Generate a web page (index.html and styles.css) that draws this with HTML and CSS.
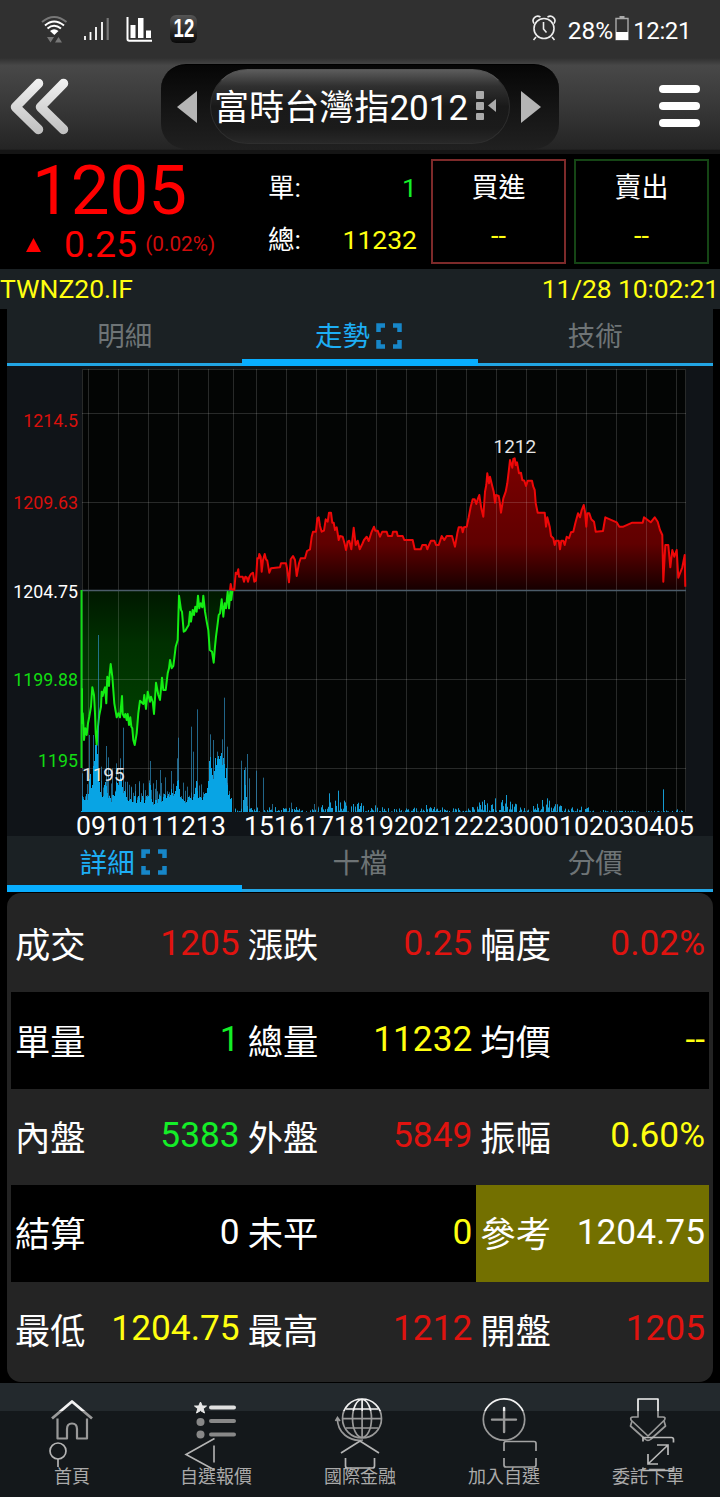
FILE: index.html
```html
<!DOCTYPE html>
<html lang="zh-Hant">
<head>
<meta charset="utf-8">
<title>富時台灣指2012</title>
<link rel="stylesheet" href="styles.css">
</head>
<body>
<div class="status">
  <svg class="status-icons" viewBox="0 0 240 58" width="240" height="58">
    <g fill="none" stroke="#fff" stroke-width="2">
      <path d="M42 22Q54 12 66.500 22" stroke="#777"/>
      <path d="M45 25.500Q54 17.500 64 25.500M47.500 28.500Q54 23 61 28.500"/>
    </g>
    <path d="M50 31Q54 27.500 58.500 31L54.300 35z" fill="#fff"/>
    <path d="M47 37h7l-3.500 5.500zM55 42.500h7L58.500 37z" fill="#777"/>
    <path d="M85 36v4M90.500 32v8M96 27v13M102 22v18" stroke="#fff" stroke-width="1.800"/>
    <path d="M107.700 18v22" stroke="#777" stroke-width="2.200"/>
    <path d="M127.500 17v22q0 1.800 1.800 1.800H152" stroke="#fff" stroke-width="2" fill="none"/>
    <path d="M130.500 25h5v13h-5zM138 18h5.500v20H138zM146 30.500h5V38h-5z" fill="#fff"/>
  </svg>
  <span class="badge"><span>12</span></span>
  <span class="status-right">
    <svg viewBox="0 0 26 28" width="26" height="28" fill="none" stroke="#eee" stroke-width="1.600">
      <circle cx="13" cy="14.500" r="10"/><path d="M12.500 8v7l3 3.500M5 23l-2.500 3M21 23l2.500 3M3 9.500C0 5 5 .5 9.500 3M23 9.500C26 5 21 .5 16.500 3"/>
    </svg>
    <span class="pct">28%</span>
    <svg viewBox="0 0 14 26" width="14" height="26"><path d="M1 3.500h12v21H1z" fill="none" stroke="#aaa" stroke-width="1.400"/><path d="M4.500 1h5v2h-5z" fill="#aaa"/><path d="M1 17h12v8H1z" fill="#fff"/></svg>
    <span class="clock">12:21</span>
  </span>
</div>

<header class="header">
  <svg class="back" viewBox="0 0 72 60" width="72" height="60">
    <defs><linearGradient id="metal" x1="0" y1="0" x2="0" y2="60" gradientUnits="userSpaceOnUse"><stop offset="0" stop-color="#f4f4f4"/><stop offset="1" stop-color="#bdbdbd"/></linearGradient></defs>
    <path d="M38.500 7.500L15.500 31 38.500 53.500M63.500 7.500L40.500 31 63.500 53.500" fill="none" stroke="url(#metal)" stroke-width="9.500" stroke-linecap="round" stroke-linejoin="round"/>
  </svg>
  <div class="switcher">
    <svg class="arrow" viewBox="0 0 20 32" width="20" height="32"><path d="M20 0v32L0 16z" fill="#b5b5b5"/></svg>
    <div class="title"><span>富時台灣指2012</span>
      <svg viewBox="0 0 22 30" width="22" height="30" fill="#aaa"><rect width="8" height="8" rx="1"/><rect y="11" width="8" height="8" rx="1"/><rect y="22" width="8" height="7" rx="1"/><path d="M20 8v13L12 14.500z"/></svg>
    </div>
    <svg class="arrow" viewBox="0 0 20 32" width="20" height="32"><path d="M0 0v32l20-16z" fill="#b5b5b5"/></svg>
  </div>
  <div class="menu"><i></i><i></i><i></i></div>
</header>

<section class="quote">
  <div class="price">
    <div class="last">1205</div>
    <div class="change"><svg viewBox="0 0 15 14" width="15" height="14"><path d="M0 14h15L7.500 0z" fill="#f00"/></svg><b>0.25</b><small>(0.02%)</small></div>
  </div>
  <dl class="volume">
    <div><dt>單:</dt><dd class="green">1</dd></div>
    <div><dt>總:</dt><dd class="yellow">11232</dd></div>
  </dl>
  <div class="order buy"><span>買進</span><em>--</em></div>
  <div class="order sell"><span>賣出</span><em>--</em></div>
</section>

<div class="info"><span>TWNZ20.IF</span><span>11/28 10:02:21</span></div>

<main class="panel">
  <nav class="tabs">
    <div class="tab">明細</div>
    <div class="tab active">走勢<svg viewBox="0 0 26 26" width="26" height="26"><path d="M2.500 9V2.500H9M17 2.500h6.500V9M23.500 17v6.500H17M9 23.500H2.500V17" fill="none" stroke="#1787c9" stroke-width="4.500"/></svg></div>
    <div class="tab">技術</div>
  </nav>

  <svg class="chart" id="chart" viewBox="7 366 706 470" width="706" height="470">
    <defs>
      <linearGradient id="down" x1="0" y1="590" x2="0" y2="745" gradientUnits="userSpaceOnUse"><stop offset="0" stop-color="#001800"/><stop offset=".35" stop-color="#003000"/><stop offset="1" stop-color="#004200"/></linearGradient>
      <linearGradient id="up" x1="0" y1="458" x2="0" y2="590" gradientUnits="userSpaceOnUse"><stop offset="0" stop-color="#7a0000"/><stop offset=".65" stop-color="#600000"/><stop offset="1" stop-color="#160000"/></linearGradient>
    </defs>
    <rect x="82" y="369" width="604" height="443" fill="#030504"/>
    <g id="areas"></g>
    <g id="grid" stroke="#ffffff" stroke-opacity=".15" fill="none"></g>
    <path d="M82 590.500h604" stroke="#4b5c69" stroke-width="1.300"/>
    <g id="lines" fill="none" stroke-linejoin="round"></g>
    <g id="volume"></g>
    <g class="axis" text-anchor="end">
      <text x="78" y="426.500" fill="#d9100c">1214.5</text>
      <text x="78" y="508.500" fill="#d9100c">1209.63</text>
      <text x="78" y="597.500" fill="#fff">1204.75</text>
      <text x="78" y="686" fill="#12dc12">1199.88</text>
      <text x="78" y="767" fill="#12dc12">1195</text>
    </g>
    <g class="mark"><text x="493.500" y="453">1212</text><text x="82" y="781">1195</text></g>
    <g class="hours" id="hours" text-anchor="middle"></g>
  </svg>

  <nav class="tabs lower">
    <div class="tab active">詳細<svg viewBox="0 0 26 26" width="26" height="26"><path d="M2.500 9V2.500H9M17 2.500h6.500V9M23.500 17v6.500H17M9 23.500H2.500V17" fill="none" stroke="#1787c9" stroke-width="4.500"/></svg></div>
    <div class="tab">十檔</div>
    <div class="tab">分價</div>
  </nav>
</main>

<section class="details">
  <div class="row"><p><span>成交</span><b class="red">1205</b></p><p><span>漲跌</span><b class="red">0.25</b></p><p><span>幅度</span><b class="red">0.02%</b></p></div>
  <div class="row dark"><p><span>單量</span><b class="green">1</b></p><p><span>總量</span><b class="yellow">11232</b></p><p><span>均價</span><b class="yellow">--</b></p></div>
  <div class="row"><p><span>內盤</span><b class="green">5383</b></p><p><span>外盤</span><b class="red">5849</b></p><p><span>振幅</span><b class="yellow">0.60%</b></p></div>
  <div class="row dark"><p><span>結算</span><b>0</b></p><p><span>未平</span><b class="yellow">0</b></p><p class="flash"><span>參考</span><b>1204.75</b></p></div>
  <div class="row"><p><span>最低</span><b class="yellow">1204.75</b></p><p><span>最高</span><b class="red">1212</b></p><p><span>開盤</span><b class="red">1205</b></p></div>
</section>

<footer class="bottom">
  <a class="item"><svg viewBox="0 1383 144 86" width="144" height="86">
    <defs><linearGradient id="sheen" x1="0" y1="1383" x2="0" y2="1497" gradientUnits="userSpaceOnUse"><stop offset=".245" stop-color="#f2f2f2"/><stop offset=".246" stop-color="#999"/></linearGradient></defs>
    <g fill="none" stroke="url(#sheen)" stroke-width="2.200" stroke-linejoin="round">
      <path d="M52 1418.500L72 1401.500 92 1418.500" stroke-width="2.800"/><path d="M57.500 1418.500V1438.500H67V1429q0-5.500 5-5.500t5 5.500v9.500h10V1418.500"/>
    </g>
    <g fill="none" stroke="#b4b4b4" stroke-width="1.700"><circle cx="58" cy="1451" r="8"/><path d="M58 1459v8"/></g>
  </svg><span>首頁</span></a>
  <a class="item"><svg viewBox="144 1383 144 86" width="144" height="86">
    <path d="M200.500 1402l1.800 4h4.200l-3.300 2.700 1.300 4.300-4-2.400-4 2.400 1.300-4.300-3.300-2.700h4.200z" fill="#e8e8e8" stroke="#e8e8e8"/>
    <circle cx="200.500" cy="1422" r="4" fill="#888"/><circle cx="200.500" cy="1434.500" r="4" fill="#888"/>
    <path d="M211 1407.500h23" stroke="#e0e0e0" stroke-width="4" stroke-linecap="round"/><path d="M211 1421h23M211 1434.500h23" stroke="#888" stroke-width="4" stroke-linecap="round"/>
    <path d="M214.500 1438.500L186 1454.500 214.500 1470M214 1445.500v17" fill="none" stroke="#b4b4b4" stroke-width="1.600"/>
  </svg><span>自選報價</span></a>
  <a class="item"><svg viewBox="288 1383 144 86" width="144" height="86">
    <g fill="none" stroke="url(#sheen)" stroke-width="1.700">
      <circle cx="362" cy="1418.500" r="19.500"/><ellipse cx="362" cy="1418.500" rx="9.500" ry="19"/><path d="M362.100 1399.500v38M343 1418.600h38M346 1409h32M346 1428h32"/>
      <path d="M337.500 1418C337 1432 349 1442 363 1440M335.500 1421l2-3.500 2.500 3.500"/>
    </g>
    <path d="M341 1453L360 1441 379 1453M345.500 1458v8q0 2 2 2h25q2 0 2-2v-8" fill="none" stroke="#b4b4b4" stroke-width="1.700"/>
  </svg><span>國際金融</span></a>
  <a class="item"><svg viewBox="432 1383 144 86" width="144" height="86">
    <g fill="none" stroke="url(#sheen)"><circle cx="504" cy="1419.500" r="20.700" stroke-width="1.700"/><path d="M504.100 1408v24M492 1419.600h24" stroke-width="2.400" stroke-linecap="round"/></g>
    <path d="M504 1451v-7.500q0-2 2-2h28q2 0 2 2v7.500M504 1458v7q0 2 2 2h28q2 0 2-2v-7" fill="none" stroke="#a4a4a4" stroke-width="1.700"/>
  </svg><span>加入自選</span></a>
  <a class="item"><svg viewBox="576 1383 144 86" width="144" height="86">
    <g fill="none" stroke="url(#sheen)" stroke-width="1.700" stroke-linejoin="round"><path d="M638 1399h20v18h5q3 0 1.500 3L648 1436 631 1420q-1-3 2-3h5z"/><path d="M632 1421l-1.500 5L645 1439q3 3 6 0l14.500-13-1.500-5"/></g>
    <path d="M643 1441.500v-4h28.500q2 0 2 2v3M643 1467.500v3h28.500q2 0 2-2v-2M648 1464L668 1445M657 1445h11v10M648 1454v10h10" fill="none" stroke="#b8b8b8" stroke-width="1.700"/>
  </svg><span>委託下單</span></a>
</footer>
<script src="chart.js"></script>
</body>
</html>
```
FILE: chart.js
```js
// Series are stored in thirds of a pixel, each with its own origin.
const parse = (text, ox, oy) =>
  text.trim().split(/\s+/).map(p => p.split(',').map(Number)).map(([x, y]) => [ox + x / 3, oy + y / 3]);
const join = pts => pts.map(p => p[0].toFixed(1) + ' ' + p[1].toFixed(1)).join('L');
const add = (id, markup) => document.getElementById(id).insertAdjacentHTML('beforeend', markup);

const down = parse(`36,325 36,430 38,400 40,430 42,480 46,445 50,465 54,430 58,410 63,380 67,322 72,345 75,400 77,460 80,495 84,440 88,405 93,380 95,335 98,348 102,330 105,322 109,370 112,290 117,318 119,280 122,252 127,290 133,370 140,412 145,400 150,412 156,348 158,402 163,412 166,402 170,420 173,402 177,435 181,412 184,440 187,445 190,480 194,495 200,460 205,400 210,362 220,372 223,345 228,387 233,335 240,365 243,350 248,365 252,402 258,308 265,345 270,360 276,293 280,330 287,330 293,280 297,265 300,240 305,265 310,258 313,235 317,200 323,180 327,47 333,90 336,95 341,155 346,152 350,145 356,135 360,95 363,125 368,90 372,105 376,80 380,95 384,47 388,85 392,70 397,82 400,47 405,95 410,125 415,150 419,210 426,215 431,248 435,200 438,170 443,130 446,105 450,100 455,58 460,110 464,70 468,85 473,35 477,85 481,35 484,60 487,33`, 70, 580);

const up = parse(`0,450 2,432 5,448 13,450 17,398 21,402 25,388 27,410 38,410 42,425 46,410 50,412 54,425 58,410 63,402 69,398 73,425 78,422 82,355 86,355 88,342 92,350 95,395 99,360 104,342 108,358 112,362 118,398 123,385 150,382 153,370 168,370 171,385 177,427 182,358 189,348 195,360 200,408 207,370 212,355 225,355 231,333 240,328 245,290 249,275 258,275 262,235 266,232 270,258 275,275 282,272 287,238 293,245 297,218 303,218 307,248 311,248 315,270 320,262 326,300 330,288 338,290 344,312 348,330 353,305 358,302 364,328 371,263 377,315 383,302 389,328 397,312 402,300 410,290 416,303 424,278 432,260 436,272 443,272 450,290 457,275 470,275 474,288 486,288 489,275 500,275 503,288 518,288 523,300 548,300 554,328 572,328 577,315 588,315 592,328 597,315 603,302 613,302 618,315 626,315 635,288 643,300 650,288`, 230, 440)
  .concat(parse(`0,318 6,318 15,350 22,310 26,292 35,292 38,307 42,292 50,290 56,262 62,230 68,208 74,208 79,222 84,205 88,195 94,235 100,260 105,185 109,165 112,130 117,160 120,140 126,165 131,185 135,218 138,195 146,198 149,215 153,248 160,205 167,185 172,160 176,125 180,90 187,113 190,87 194,85 197,105 201,97 207,130 213,128 217,150 223,152 228,168 233,152 246,152 250,170 254,180 257,220 263,248 284,248 288,290 292,262 299,290 303,318 310,325 314,345 318,332 326,332 330,358 334,332 340,332 344,345 350,320 357,325 363,307 370,305 376,280 384,250 390,262 395,240 401,225 405,245 409,290 412,250 418,250 424,268 432,275 437,305 459,303 466,262 500,277 508,290 520,290 547,278 578,278 582,262 602,277 614,262 623,275 630,300 637,315 640,455 646,345 655,345 661,412 667,360 673,380 680,360 685,443 697,412 704,375 706,470`, 450, 430));

add('areas', `<path fill="url(#down)" d="M82 590L${join(down)}L232 590z"/><path fill="url(#up)" d="M230 590L${join(up)}L685 590z"/>`);
add('lines', `<path d="M81.500 590V768" stroke="#0fdc14" stroke-width="2"/><path d="M${join(down)}" stroke="#14ee14" stroke-width="2"/><path d="M${join(up)}" stroke="#ee0808" stroke-width="2"/>`);

const verticals = [89, 119, 149, 179, 209, 234, 257, 287, 317, 347, 377, 407, 437, 467, 497, 527, 557, 587, 617, 647, 677];
add('grid', `<path d="M82.500 812V369.500H685.500V812${verticals.map(x => `M${x - .5} 369V812`).join('')}M82 413.500H686M82 502.500H686M82 679.500H686M82 768.500H686"/>`);

const hours = ['09', '10', '11', '12', '13', '', '15', '16', '17', '18', '19', '20', '21', '22', '23', '00', '01', '02', '03', '04', '05'];
add('hours', hours.map((h, i) => h ? `<text x="${verticals[i] + 2}" y="834.500">${h}</text>` : '').join(''));

const base = parse(`35,640 40,655 46,665 50,640 54,670 58,600 62,580 66,650 70,560 74,540 76,495 82,495 84,580 88,600 92,640 96,650 100,655 105,600 110,620 115,655 120,645 124,670 128,640 135,650 140,600 145,620 150,590 155,600 160,640 165,630 170,655 176,665 182,655 190,670 195,640 200,672 206,645 212,668 218,645 224,670 230,645 235,655 240,590 244,655 252,678 258,655 262,670 270,640 275,670 284,640 290,655 296,640 300,660 304,625 310,650 318,630 321,605 327,600 330,650 340,660 348,670 356,650 362,655 368,660 374,640 380,600 384,655 392,650 398,660 404,640 410,640 416,600 420,510 424,560 428,590 432,600 436,530 440,560 444,525 450,540 454,510 458,560 462,520 466,600 470,560 474,650 478,640 482,660 486,650`, 70, 580);

const spikes = parse(`36,580 58,465 70,465 83,165 94,560 107,498 115,532 127,565 139,550 151,535 158,443 166,605 182,620 195,612 206,608 218,610 240,543 259,600 271,570 285,592 303,573 320,535 325,473 362,440 368,515 381,388 421,463 428,480 440,515 457,478 463,353 471,500 513,542 524,562 531,522 537,595 557,572 579,593 607,672 663,668 733,672 745,680 776,642`, 70, 580);
let bars = spikes.map(([x, y]) => `M${Math.round(x) + .5} ${y}V812`).join('');
let strong = `M244.500 770V812M245.500 785V812M246.500 797V812M243.500 800V812M247.500 806V812`;
const later = parse(`28,160 46,182 55,152 71,182 98,192 110,192 120,198 166,196 205,205 283,204 318,195 350,206 400,205 470,200 480,195 487,185 493,180 500,190 512,195 524,175 545,180 557,165 570,185 583,200 640,198 667,180 680,175 687,182 705,196 722,198 757,202 784,200 803,202 850,210 1030,148 1072,208`, 320, 740);
strong += later.map(([x, y]) => `M${Math.round(x) + .5} ${y}V812`).join('');
// Thin trades fill the gaps between the peaks.
let seed = 11;
for (let x = 235; x < 685; x++) {
  seed = (seed * 73 + 41) % 1009;
  const peak = (x > 320 && x < 365) || (x > 475 && x < 520) || (x > 535 && x < 565) ? 10 : x < 590 ? 5 : 1.5;
  const h = Math.pow(seed / 1009, 2.2) * peak;
  if (h > .3) strong += `M${x + .5} ${812 - h}V812`;
}
// Opening session chatter above the solid base.
for (let x = 83; x < 230; x += 2) {
  seed = (seed * 73 + 41) % 1009;
  bars += `M${x + .5} ${798 - (seed / 1009) * 18}V812`;
}
add('volume', `<path d="${bars}" stroke="#2f8fc0" stroke-opacity=".7"/><path d="${strong}" stroke="#149bd2"/>`);
add('volume', `<path fill="#08a4e4" shape-rendering="crispEdges" d="M81.500 812L${join(base)}L232 812z"/>`);
```
FILE: styles.css
```css
* { box-sizing: border-box; }
body {
  margin: 0; width: 720px; height: 1497px; overflow: hidden;
  background: #000; color: #fff;
  font-family: Roboto, "Noto Sans CJK TC", sans-serif;
}
svg { display: block; flex: none; }
p, dl, dd { margin: 0; }
b, em, i { font-weight: 400; font-style: normal; }
.red { color: #e0130f; }
.green { color: #14ee28; }
.yellow { color: #ffff10; }

.status { height: 58px; background: #303030; display: flex; align-items: center; padding-right: 29px; }
.status-icons { margin-right: -70px; }
.badge {
  width: 27px; height: 28px; border-radius: 6px; background: linear-gradient(#555, #080808);
  font: 700 25px/27px "Liberation Sans", sans-serif; display: flex; justify-content: center;
}
.badge span { transform: scaleX(.74); }
.status-right { margin-left: auto; display: flex; align-items: center; font-size: 25px; line-height: 58px; padding-top: 3px; }
.status-right .pct { margin: 0 2px 0 11px; font-size: 24.500px; }
.status-right svg { margin-top: -5px; }
.status-right .clock { margin-left: 4px; font-size: 24px; letter-spacing: -.4px; }

.header { height: 96px; display: flex; align-items: center; background: linear-gradient(#303030, #484848 8%, #383838 50%, #242424 95%, #151515 96%); }
.back { margin: 0 89px 0 0; }
.switcher {
  width: 398px; height: 85px; border-radius: 25px; background: linear-gradient(#060606, #141414 50%, #202020);
  display: flex; align-items: center; padding: 0 17px 0 16px; border-top: 1px solid #000;
}
.title {
  width: 300px; height: 75px; margin: 0 11px 0 13px; border-radius: 38px; padding-left: 3px; white-space: nowrap;
  background: linear-gradient(#5c5c5c, #303030 22%, #191919 50%, #1b1b1b 80%, #282828); border: 1px solid #2e2e2e; border-top-color: #555;
  display: flex; align-items: center; gap: 8px; font-size: 35.100px; line-height: 70px;
}
.title span { padding-top: 3px; }
.title svg { margin-top: -2px; }
.menu { margin-left: 100px; display: flex; flex-direction: column; gap: 9px; }
.menu i { width: 41px; height: 8px; border-radius: 4px; background: #fff; }

.quote { height: 115px; display: flex; }
.price { width: 268px; padding-left: 32px; color: #f00; }
.last { font-size: 69px; line-height: 72px; height: 72px; padding-top: 1px; }
.change { display: flex; align-items: center; height: 37px; margin-left: -6px; line-height: 1; }
.change b { font-size: 37.500px; margin-left: 23px; }
.change small { font-size: 20.800px; margin-left: 8px; color: #d00c0c; line-height: 24px; padding-bottom: 2px; }
.volume { width: 149px; padding-top: 8px; }
.volume div { display: flex; justify-content: space-between; height: 52px; line-height: 52px; font-size: 26.500px; }
.order { width: 135px; height: 105px; margin: 5px 8px 0 0; border: 2px solid #7d2a2a; display: flex; flex-direction: column; text-align: center; font-size: 27px; padding-top: 2px; }
.order.buy { margin-left: 14px; }
.order.sell { border-color: #154515; margin-right: 0; }
.order span { height: 50px; line-height: 50px; }
.order em { color: #ffff10; line-height: 46px; }

.info { height: 40px; background: #1b2124; display: flex; justify-content: space-between; color: #ffff10; font-size: 26.500px; line-height: 39px; padding: 0 1px 0 0; }
.info span:last-child { letter-spacing: -.15px; }

.panel { width: 706px; margin: 0 auto; background: #101418; }
.tabs { height: 57px; display: grid; grid-template-columns: repeat(3, 1fr); background: #1b2124; border-bottom: 3px solid #22a5e4; }
.tab { height: 57px; padding-bottom: 7px; display: flex; align-items: center; justify-content: center; gap: 6px; font-size: 27.500px; color: #6e7476; }
.tab svg { margin-top: 3px; }
.tab.active { color: #1daef5; border-bottom: 7px solid #08aeff; padding: 0 3px 0 0; }
.lower.tabs, .lower .tab { height: 56px; }
.chart { overflow: visible; position: relative; }
.axis { font-size: 17.800px; }
.mark { font-size: 19px; fill: #e6e6e6; }
.hours { font-size: 26.600px; fill: #fff; }

.details { width: 706px; height: 489px; margin: 1px auto 1px; padding: 3px 4px 4px; background: #242424; border-radius: 14px; }
.row { height: 96.400px; display: grid; grid-template-columns: repeat(3, 1fr); }
.row.dark { background: #000; }
.row p { display: flex; justify-content: space-between; align-items: center; padding: 0 4px 3px; font-size: 35.300px; white-space: nowrap; }
.row .flash { background: #737000; }

.bottom { height: 114px; display: grid; grid-template-columns: repeat(5, 1fr); background: linear-gradient(#23292d 28px, #14181b 28px); }
.item { height: 114px; color: #aaa; text-align: center; font-size: 18px; line-height: 26px; }
.item svg { height: 86px; margin-bottom: -5px; overflow: visible; }
```
